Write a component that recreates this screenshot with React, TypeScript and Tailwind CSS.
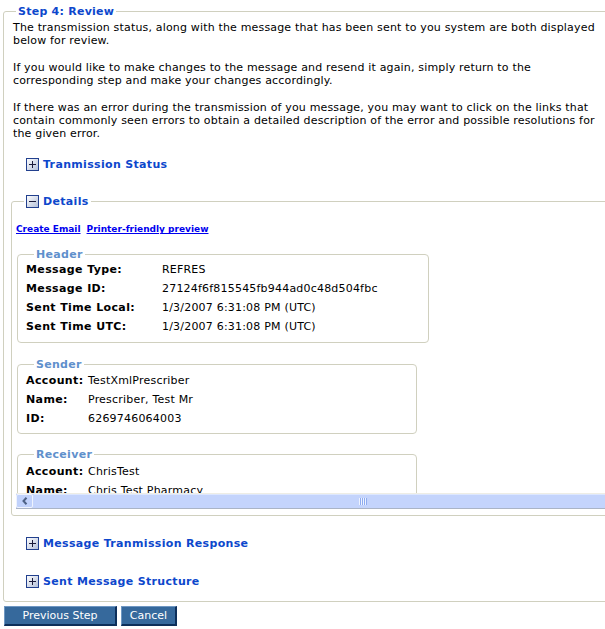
import React, { useId } from "react";

function Box({ minus }: { minus?: boolean }) {
  const id = useId().replace(/:/g, "");
  return (
    <svg width="13" height="13" viewBox="0 0 13 13" className="block shrink-0">
      <defs>
        <linearGradient id={id} x1="0" y1="0" x2="1" y2="1">
          <stop offset="0" stopColor="#ffffff" />
          <stop offset="1" stopColor="#b3bfd8" />
        </linearGradient>
      </defs>
      <rect x="0.5" y="0.5" width="12" height="12" fill={`url(#${id})`} stroke="#22408e" />
      <rect x="3" y="6" width="7" height="1" fill="#1b1b3a" />
      {!minus && <rect x="6" y="3" width="1" height="7" fill="#1b1b3a" />}
    </svg>
  );
}

function Section({ title, className }: { title: string; className: string }) {
  return (
    <div className={`flex items-center gap-[4px] h-[13px] pl-[13px] ${className}`}>
      <Box />
      <span className="font-bold tracking-[0.33px] text-[#0d47cc] leading-[13px]">{title}</span>
    </div>
  );
}

function Row({ label, value, w }: { label: string; value: string; w: string }) {
  return (
    <div className="flex items-center h-[19px] whitespace-nowrap">
      <span className={`font-bold tracking-[0.38px] ${w}`}>{label}</span>
      <span className="tracking-[0.2px]">{value}</span>
    </div>
  );
}

export default function App() {
  return (
    <div className="w-[605px] h-[629px] overflow-hidden bg-white text-black text-[11px] font-['DejaVu_Sans',Verdana,sans-serif]">
      <fieldset className="mt-[5px] ml-[3px] w-[680px] border border-[#d0d0bf] rounded-[3px] pl-[9px] pb-[13px]">
        <legend className="ml-[3px] px-[2px] leading-[13px] font-bold tracking-[0.25px] text-[#0d47cc]">Step 4: Review</legend>
        <div className="pt-[3px] leading-[13.3px] tracking-[0.17px] whitespace-nowrap">
          The transmission status, along with the message that has been sent to you system are both displayed
          <br />
          below for review.
          <br />
          <br />
          If you would like to make changes to the message and resend it again, simply return to the
          <br />
          corresponding step and make your changes accordingly.
          <br />
          <br />
          If there was an error during the transmission of you message, you may want to click on the links that
          <br />
          contain commonly seen errors to obtain a detailed description of the error and possible resolutions for
          <br />
          the given error.
        </div>

        <Section className="mt-[17px]" title="Tranmission Status" />

        <fieldset className="mt-[24px] ml-[-2px] border border-[#d0d0bf] rounded-[3px] pl-[4px] pb-[6px]">
          <legend className="ml-[8px] px-[2px]">
            <span className="flex items-center gap-[4px] h-[13px]">
              <Box minus />
              <span className="font-bold tracking-[0.33px] text-[#0d47cc] leading-[13px]">Details</span>
            </span>
          </legend>
          <div className="mt-[16px] h-[13px] flex items-center gap-[6px] text-[9px] font-bold whitespace-nowrap">
            <a href="#" className="text-[#0000ee] underline">Create Email</a>
            <a href="#" className="text-[#0000ee] underline">Printer-friendly preview</a>
          </div>

          <div className="h-[256px] overflow-hidden">
            <fieldset className="mt-[11px] ml-[1px] w-[412px] border border-[#d0d0bf] rounded-[4px] pl-[8px] pb-[5px]">
              <legend className="ml-[8px] px-[2px] leading-[13px] font-bold tracking-[0.3px] text-[#5f90cc]">Header</legend>
              <Row w="w-[136px]" label="Message Type:" value="REFRES" />
              <Row w="w-[136px]" label="Message ID:" value="27124f6f815545fb944ad0c48d504fbc" />
              <Row w="w-[136px]" label="Sent Time Local:" value="1/3/2007 6:31:08 PM (UTC)" />
              <Row w="w-[136px]" label="Sent Time UTC:" value="1/3/2007 6:31:08 PM (UTC)" />
            </fieldset>
            <fieldset className="mt-[15px] ml-[1px] w-[400px] border border-[#d0d0bf] rounded-[4px] pl-[8px] pt-[1px] pb-[4px]">
              <legend className="ml-[8px] px-[2px] leading-[13px] font-bold tracking-[0.3px] text-[#5f90cc]">Sender</legend>
              <Row w="w-[62px]" label="Account:" value="TestXmlPrescriber" />
              <Row w="w-[62px]" label="Name:" value="Prescriber, Test Mr" />
              <Row w="w-[62px]" label="ID:" value="6269746064003" />
            </fieldset>
            <fieldset className="mt-[14px] ml-[1px] w-[400px] border border-[#d0d0bf] rounded-[4px] pl-[8px] pt-[2px] pb-[4px]">
              <legend className="ml-[8px] px-[2px] leading-[13px] font-bold tracking-[0.3px] text-[#5f90cc]">Receiver</legend>
              <Row w="w-[62px]" label="Account:" value="ChrisTest" />
              <Row w="w-[62px]" label="Name:" value="Chris Test Pharmacy" />
            </fieldset>
          </div>

          {/* horizontal scrollbar */}
          <div className="h-[1px] bg-[#eeede5]" />
          <div className="flex h-[14px] bg-[#c6d5fb]">
            <div className="w-[17px] h-[14px] shrink-0 border border-[#eef3fe] rounded-[2px] bg-[#c1d2fb] flex items-center justify-center">
              <svg width="6" height="8" viewBox="0 0 6 8" className="block">
                <polyline points="4.5,0.8 1.5,4 4.5,7.2" fill="none" stroke="#4d6185" strokeWidth="2" />
              </svg>
            </div>
            <div className="ml-[1px] w-[658px] h-[14px] shrink-0 border-t border-[#dde7fe] bg-[#c4d4fc] flex items-center justify-center">
              <div className="flex h-[7px]">
                <div className="w-[1px] bg-[#eef3ff]" />
                <div className="w-[1px] bg-[#8eacf0]" />
                <div className="w-[1px] bg-[#eef3ff]" />
                <div className="w-[1px] bg-[#8eacf0]" />
                <div className="w-[1px] bg-[#eef3ff]" />
                <div className="w-[1px] bg-[#8eacf0]" />
                <div className="w-[1px] bg-[#eef3ff]" />
                <div className="w-[1px] bg-[#8eacf0]" />
              </div>
            </div>
          </div>
          <div className="h-[1px] bg-[#aab4c6]" />
        </fieldset>

        <Section className="mt-[21px]" title="Message Tranmission Response" />
        <Section className="mt-[25px]" title="Sent Message Structure" />
      </fieldset>

      <div className="mt-[4px] ml-[4px] flex gap-[4px]">
        <button className="w-[113px] h-[20px] bg-[#36699c] text-white text-[11px] leading-[13px] border-t border-l border-t-[#6f97c2] border-l-[#6f97c2] border-b-2 border-r-2 border-b-[#0d2f5a] border-r-[#0d2f5a]">
          Previous Step
        </button>
        <button className="w-[56px] h-[20px] bg-[#36699c] text-white text-[11px] leading-[13px] border-t border-l border-t-[#6f97c2] border-l-[#6f97c2] border-b-2 border-r-2 border-b-[#0d2f5a] border-r-[#0d2f5a]">
          Cancel
        </button>
      </div>
    </div>
  );
}
